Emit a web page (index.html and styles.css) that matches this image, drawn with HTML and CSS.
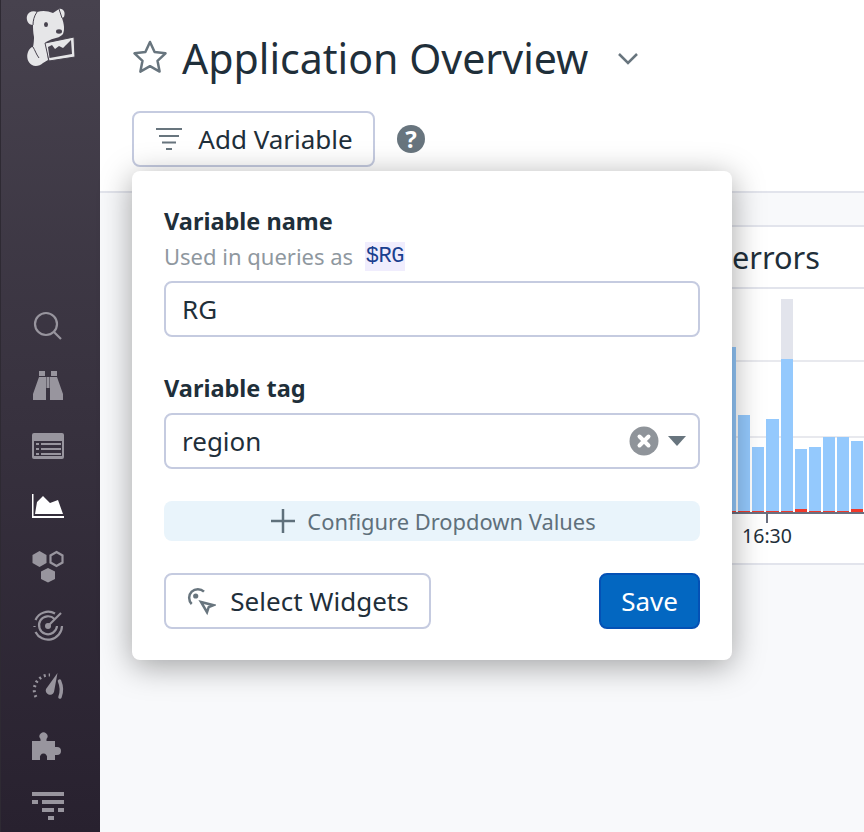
FILE: index.html
```html
<!DOCTYPE html>
<html lang="en">
<head>
  <meta charset="utf-8" />
  <title>Application Overview</title>
  <link rel="stylesheet" href="styles.css">
</head>
<body>
<div class="app">
  <nav class="sidebar">
    <!-- logo -->
    <svg class="logo" width="100" height="72" viewBox="0 0 100 72">
      <path class="dog" d="M37 12C43 10 48 11 53 13L59 9C63 8 66 12 64 17L62 18C64 24 65 29 63 34C60 38 54 38 50 40L46 42L48 60L43 63C40 66 35 67 32 65C28 63 26 57 28 52C29 49 31 47 33 47C34 43 34 38 34 37C33 32 33 28 33 25C28 25 26 20 27 16C28 12 33 10 37 12Z"/>
      <path class="dog panel" d="M45 43L74 37L75 57L49 61Z"/>
      <path class="dog-dark" d="M49.500 58L48 47L52 45L55 49L59 46L63 48L66 45L71 40L72 54Z"/>
      <ellipse class="dog-dark" cx="46" cy="24.500" rx="2" ry="2.600"/>
      <ellipse class="dog-dark" cx="59" cy="31.500" rx="3" ry="2.200"/>
      <path class="dog-line" d="M37 12C34 16 33 21 33 25M59 9L62 18M33 47C35 50 36 54 39 58"/>
    </svg>

    <div class="nav-icons">
      <svg class="nav-icon" viewBox="0 0 36 36"><circle class="line" cx="16" cy="16" r="11"/><path class="line" d="M24 24L31 31"/></svg>
      <svg class="nav-icon" viewBox="0 0 36 36"><path d="M9 3h6v5H9zM21 3h6v5h-6zM9 9h7v23H3v-6zM27 9h-7v23h13v-6z"/><rect x="16.500" y="9" width="3" height="11"/></svg>
      <svg class="nav-icon" viewBox="0 0 36 36"><path fill-rule="evenodd" d="M4 5h28a2 2 0 0 1 2 2v22a2 2 0 0 1-2 2H4a2 2 0 0 1-2-2V7a2 2 0 0 1 2-2zM4 13v15h28V13z"/><path d="M6 15h3v2H6zM11 15h20v2H11zM6 20h3v2H6zM11 20h20v2H11zM6 25h3v2H6zM11 25h20v2H11z"/></svg>
      <svg class="nav-icon active" viewBox="0 0 36 36"><path d="M2 6h1.500v22H34v2H2z"/><path d="M5 26L7 14L13 8L20 15L28 12L33 26z"/></svg>
      <svg class="nav-icon" viewBox="0 0 36 36"><path d="M9.500 3l7 4v8l-7 4-7-4V7z"/><path class="line" d="M26.500 4l6 3.500v7l-6 3.500-6-3.500v-7z"/><path d="M18 20l7 3.500V31l-7 3.500-7-3.500v-7.500z"/></svg>
      <svg class="nav-icon" viewBox="0 0 36 36"><path class="line" d="M25 5.500A14 14 0 0 0 5.500 12M4.500 18v1M5.500 24A14 14 0 0 0 32 18M24.500 11A9 9 0 1 0 27 18"/><circle cx="18" cy="18" r="3"/><path class="line" d="M18 18L31 5"/></svg>
      <svg class="nav-icon" viewBox="0 0 36 36"><path class="dots" d="M6 29A15 15 0 0 1 20 7"/><path class="thick" d="M29.500 13Q33 21 30 29"/><path d="M27.500 5L24 24a4 4 0 0 1-8-3z"/></svg>
      <svg class="nav-icon" viewBox="0 0 36 36"><path d="M2 13H10.500V11A4 4 0 1 1 16.500 11V13H25V19H27A4 4 0 1 1 27 27H25V32H17V30A3.600 3.600 0 1 0 10 30V32H2Z"/></svg>
      <svg class="nav-icon" viewBox="0 0 36 36"><path d="M2 4h32v4H2zM2 12h6v4H2zM12 12h22v4H12zM12 20h12v4H12zM28 20h6v4h-6zM18 28h6v4h-6z"/></svg>
    </div>
  </nav>

  <main class="main">
    <header class="header">
      <div class="title-row">
        <svg class="star" width="36" height="36" viewBox="0 0 36 36"><path d="M18 3l4.600 10 10.900 1.300-8 7.500 2.100 10.800L18 27.200 8.400 32.600l2.100-10.800-8-7.500L13.400 13z"/></svg>
        <h1>Application Overview</h1>
        <svg class="chevron" width="22" height="14" viewBox="0 0 22 14"><path d="M2 3l9 9 9-9"/></svg>
      </div>
      <div class="toolbar">
        <div class="btn add-btn">
          <svg class="filter-icon" width="28" height="24" viewBox="0 0 28 24"><path d="M1 2h26M4 9h20M7 15.500h14M11 22h6"/></svg>
          Add Variable
        </div>
        <div class="help">?</div>
      </div>
    </header>

    <section class="dash">
      <div class="card">
        <div class="card-title">hits.errors</div>
        <div class="chart">
          <div class="grid-line first"></div>
          <div class="grid-line second"></div>
          <div class="bars">
            <div class="bar"><i class="blue" style="height:164px"></i><i class="red" style="height:1px"></i></div>
            <div class="bar"><i class="blue" style="height:96px"></i><i class="red" style="height:1px"></i></div>
            <div class="bar"><i class="blue" style="height:64px"></i><i class="red" style="height:1px"></i></div>
            <div class="bar"><i class="blue" style="height:92px"></i><i class="red" style="height:1px"></i></div>
            <div class="bar"><i class="grey" style="height:60px"></i><i class="blue" style="height:152px"></i><i class="red" style="height:1px"></i></div>
            <div class="bar"><i class="blue" style="height:60px"></i><i class="red" style="height:3px"></i></div>
            <div class="bar"><i class="blue" style="height:64px"></i><i class="red" style="height:1px"></i></div>
            <div class="bar"><i class="blue" style="height:74px"></i><i class="red" style="height:1px"></i></div>
            <div class="bar"><i class="blue" style="height:74px"></i><i class="red" style="height:1px"></i></div>
            <div class="bar"><i class="blue" style="height:68px"></i><i class="red" style="height:3px"></i></div>
          </div>
        </div>
        <div class="axis"><div class="axis-label">16:30</div></div>
      </div>
    </section>

    <!-- variable popover -->
    <div class="popover">
      <div class="label">Variable name</div>
      <div class="hint">Used in queries as <code>$RG</code></div>
      <div class="field">RG</div>

      <div class="label second">Variable tag</div>
      <div class="field select">
        <span>region</span>
        <span class="select-controls">
          <svg width="30" height="30" viewBox="0 0 30 30"><circle class="clear-bg" cx="15" cy="15" r="14.500"/><path class="clear-x" d="M10.500 10.500l9 9M19.500 10.500l-9 9"/></svg>
          <svg width="18" height="10" viewBox="0 0 18 10"><path class="caret" d="M0 0h18l-9 10z"/></svg>
        </span>
      </div>

      <div class="configure">
        <svg width="24" height="24" viewBox="0 0 24 24"><path d="M12 0v24M0 12h24"/></svg>
        Configure Dropdown Values
      </div>

      <div class="actions">
        <div class="btn select-btn">
          <svg class="cursor-icon" width="30" height="30" viewBox="0 0 30 30"><path class="cursor-line" d="M18 5.700A8 8 0 1 0 5.700 18"/><circle class="cursor-dot" cx="9.700" cy="10" r="2.600"/><path class="cursor-line" d="M15 16l12.500 3.200-4.800 2-1.700 5z"/></svg>
          Select Widgets
        </div>
        <div class="btn save-btn">Save</div>
      </div>
    </div>
  </main>
</div>
</body>
</html>
```

FILE: styles.css
```css
html, body{
  margin: 0;
  height: 100%;
  overflow: hidden;
}
body{
  font-family: 'Noto Sans', sans-serif;
  color: #1f2f3a;
  background: #f8f9fb;
}
.app{
  display: flex;
  height: 832px;
}

/* sidebar */
.sidebar{
  width: 100px;
  flex: none;
  background: linear-gradient(#47424e, #28212f);
  border-left: 1px solid #2e2a33;
  box-sizing: border-box;
}
.logo{
  display: block;
  margin-left: -1px;
}
.dog{ fill: #e6e6e8; }
.dog.panel{
  stroke: #47424e;
  stroke-width: 1;
}
.dog-dark{ fill: #47424e; }
.dog-line{
  fill: none;
  stroke: #47424e;
  stroke-width: 1;
}
.nav-icons{
  display: flex;
  flex-direction: column;
  gap: 24px;
  margin-top: 236px;
  padding-left: 29px;
}
.nav-icon{
  width: 36px;
  height: 36px;
  flex: none;
  fill: #98959e;
}
.nav-icon .line{
  fill: none;
  stroke: #98959e;
  stroke-width: 2.2;
}
.nav-icon .dots{
  fill: none;
  stroke: #98959e;
  stroke-width: 3;
  stroke-dasharray: 2 3;
}
.nav-icon .thick{
  fill: none;
  stroke: #98959e;
  stroke-width: 3.500;
  stroke-linecap: round;
}
.nav-icon.active{
  fill: #fff;
}

/* header */
.main{
  flex: 1;
  position: relative;
  min-width: 0;
}
.header{
  height: 193px;
  box-sizing: border-box;
  background: #fff;
  border-bottom: 2px solid #e2e4ec;
  padding: 30px 0 0 32px;
}
.title-row{
  display: flex;
  align-items: center;
  height: 56px;
}
.star{
  flex: none;
  margin-top: -2px;
}
.star path{
  fill: none;
  stroke: #68757e;
  stroke-width: 2.500;
  stroke-linejoin: round;
}
h1{
  margin: 0 0 0 14px;
  font-size: 41.100px;
  font-weight: 400;
  line-height: 56px;
}
.chevron{
  margin-left: 29px;
}
.chevron path{
  fill: none;
  stroke: #68757e;
  stroke-width: 2.500;
}
.toolbar{
  display: flex;
  align-items: center;
  margin-top: 25px;
}
.btn{
  display: flex;
  align-items: center;
  justify-content: center;
  height: 56px;
  box-sizing: border-box;
  border: 2px solid #c5cbe0;
  border-radius: 8px;
  background: #fff;
  font-size: 26px;
}
.add-btn{
  width: 243px;
}
.filter-icon{
  margin-right: 16px;
  position: relative;
  left: 1px;
}
.filter-icon path{
  fill: none;
  stroke: #68757e;
  stroke-width: 2;
}
.help{
  width: 28px;
  height: 28px;
  margin-left: 22px;
  border-radius: 50%;
  background: #68757e;
  color: #fff;
  font-size: 24px;
  font-weight: 700;
  line-height: 28px;
  text-align: center;
}

/* dashboard card */
.dash{
  padding-top: 32px;
}
.card{
  height: 340px;
  margin-left: 100px;
  box-sizing: border-box;
  background: #fff;
  border-top: 2px solid #e2e4ec;
  border-bottom: 2px solid #e2e4ec;
}
.card-title{
  height: 60px;
  padding-right: 44px;
  border-bottom: 2px solid #e2e4ec;
  font-size: 30.700px;
  line-height: 60px;
  text-align: right;
}
.chart{
  position: relative;
  height: 223px;
  border-bottom: 2px solid #6a7080;
  overflow: hidden;
}
.grid-line{
  position: absolute;
  left: 0;
  right: 0;
  height: 2px;
  background: #e8e9ee;
}
.grid-line.first{ top: 71px; }
.grid-line.second{ top: 147px; }
.bars{
  position: relative;
  display: flex;
  align-items: flex-end;
  gap: 2px;
  height: 100%;
  padding-left: 524px;
}
.bar{
  display: flex;
  flex-direction: column;
  flex: none;
  width: 12.150px;
}
.bar i{
  display: block;
}
.blue{ background: #94c9fd; }
.grey{ background: #e2e4ec; }
.red{ background: #f0382a; }
.axis{
  padding-left: 537px;
}
.axis-label{
  width: 60px;
  font-size: 19.500px;
  line-height: 24px;
  text-align: center;
}
.axis-label::before{
  content: "";
  display: block;
  width: 2px;
  height: 9px;
  margin: 0 auto 1px;
  background: #6a7080;
}

/* popover */
.popover{
  position: absolute;
  left: 32px;
  top: 171px;
  width: 600px;
  height: 489px;
  box-sizing: border-box;
  padding: 32px;
  background: #fff;
  border-radius: 8px;
  box-shadow: 0 6px 32px rgba(0, 0, 0, 0.36);
}
.label{
  font-size: 23.500px;
  font-weight: 700;
  line-height: 36px;
}
.label.second{
  margin-top: 33px;
}
.hint{
  margin-top: 3px;
  height: 29px;
  color: #8f989f;
  font-size: 22px;
  line-height: 29px;
}
.hint code{
  display: inline-block;
  vertical-align: top;
  margin-left: 6px;
  padding: 0 1px;
  background: #f0edfd;
  color: #1a3f8f;
  font-family: 'Liberation Mono', monospace;
  font-size: 22px;
  letter-spacing: -0.5px;
  line-height: 29px;
}
.field{
  display: flex;
  align-items: center;
  justify-content: space-between;
  height: 56px;
  margin-top: 10px;
  padding: 0 16px;
  box-sizing: border-box;
  border: 2px solid #c5cbe0;
  border-radius: 8px;
  font-size: 26px;
}
.field.select{
  margin-top: 7px;
  padding-right: 12px;
}
.select-controls{
  display: flex;
  align-items: center;
  gap: 9px;
}
.clear-bg{ fill: #8f949a; }
.clear-x{
  fill: none;
  stroke: #fff;
  stroke-width: 4;
  stroke-linecap: round;
}
.caret{ fill: #68757e; }
.configure{
  display: flex;
  align-items: center;
  justify-content: center;
  gap: 12px;
  height: 40px;
  margin-top: 32px;
  padding-left: 3px;
  border-radius: 8px;
  background: #e9f4fb;
  color: #5f707b;
  font-size: 21.900px;
}
.configure path{
  fill: none;
  stroke: #5f707b;
  stroke-width: 2.500;
}
.actions{
  display: flex;
  justify-content: space-between;
  margin-top: 32px;
}
.select-btn{
  width: 267px;
}
.cursor-icon{
  margin-right: 14px;
}
.cursor-line{
  fill: none;
  stroke: #68757e;
  stroke-width: 2.500;
}
.cursor-dot{ fill: #68757e; }
.save-btn{
  width: 101px;
  background: #0367c1;
  border-color: #0451b5;
  color: #fff;
}
```
